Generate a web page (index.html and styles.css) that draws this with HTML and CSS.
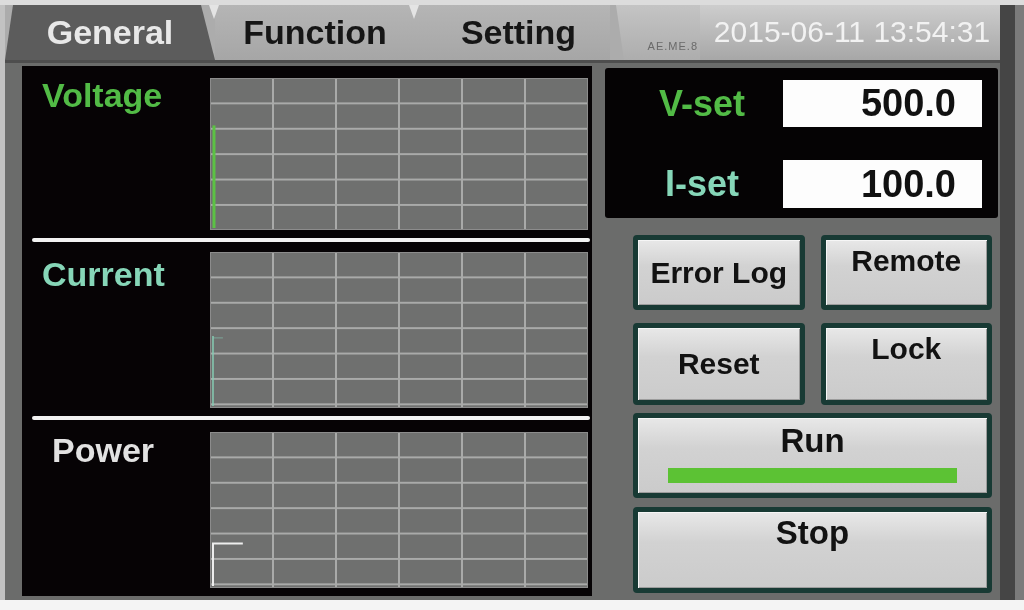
FILE: index.html
```html
<!DOCTYPE html>
<html>
<head>
    <title>Power Supply Panel</title>
    <meta charset="utf-8">
    <link rel="stylesheet" href="styles.css">
</head>
<body>
    <div class="screen">
        <div class="unit">
            <div class="tabs">
                <div class="tab tab-on">General</div>
                <div class="tab tab-notch">Function</div>
                <div class="tab tab-notch tab-last">Setting</div>
                <div class="tab-blank"><span class="ver">AE.ME.8</span></div>
                <div class="clock">2015-06-11 13:54:31</div>
            </div>
            <div class="main">
                <div class="graphs">
                    <div class="graph graph-v">
                        <div class="graph-name volt">Voltage</div>
                        <div class="plot">
                            <svg viewBox="0 0 378 152" preserveAspectRatio="none">
                                <path d="M3 47 V151" stroke="#5cc244" stroke-width="3" fill="none"/>
                            </svg>
                        </div>
                    </div>
                    <div class="rule"></div>
                    <div class="graph graph-i">
                        <div class="graph-name amp">Current</div>
                        <div class="plot">
                            <svg viewBox="0 0 378 156" preserveAspectRatio="none">
                                <path d="M2 84 V155" stroke="#86cdb4" stroke-width="1.5" fill="none"/>
                                <path d="M2 86 H12" stroke="#86cdb4" stroke-width="1" fill="none" opacity="0.6"/>
                            </svg>
                        </div>
                    </div>
                    <div class="rule"></div>
                    <div class="graph graph-p">
                        <div class="graph-name pow">Power</div>
                        <div class="plot">
                            <svg viewBox="0 0 378 156" preserveAspectRatio="none">
                                <path d="M2 155 V112 H32" stroke="#eeeeee" stroke-width="2" fill="none"/>
                            </svg>
                        </div>
                    </div>
                </div>
                <div class="side">
                    <div class="sets">
                        <div class="set-name volt">V-set</div>
                        <div class="set-val">500.0</div>
                        <div class="set-name amp">I-set</div>
                        <div class="set-val">100.0</div>
                    </div>
                    <div class="keys">
                        <button class="key">Error Log</button>
                        <button class="key key-top">Remote</button>
                        <button class="key">Reset</button>
                        <button class="key key-top">Lock</button>
                    </div>
                    <button class="key key-wide run">Run<span class="run-bar"></span></button>
                    <button class="key key-wide stop">Stop</button>
                </div>
            </div>
        </div>
        <div class="edge"></div>
    </div>
</body>
</html>
```

FILE: styles.css
```css
*{
    box-sizing: border-box;
}
body{
    margin:0;
    background-color: #f4f4f4;
    font-family: "Liberation Sans", Arial, sans-serif;
}
.screen{
    width:1024px;
    height:600px;
    display:flex;
    background-color: #6b6c6b;
    border-top:5px solid #dcdcdc;
    filter: blur(0.6px);
}
.unit{
    flex:1;
    display:flex;
    flex-direction: column;
    border-left:5px solid #c2c2c2;
}
.edge{
    width:24px;
    background: linear-gradient(to right, #454545 0, #454545 15px, #7b7b7b 15px);
}

/* tab bar */
.tabs{
    height:58px;
    display:flex;
    background-color: #acacac;
    border-bottom:3px solid #4e4e4e;
}
.tab{
    position: relative;
    height:100%;
    display:flex;
    align-items: center;
    justify-content: center;
    font-size: 34px;
    font-weight: bold;
    color:#161616;
    background: linear-gradient(#b5b5b5, #a6a6a6);
}
.tab-on{
    width:210px;
    color:#e8e8e8;
    background:#5c5c5c;
    clip-path: polygon(8px 0, 196px 0, 100% 100%, 0 100%);
}
.tab-notch{
    width:200px;
}
.tab-notch::before{
    content:"";
    position: absolute;
    left:-6px;
    top:0;
    border-left:5px solid transparent;
    border-right:5px solid transparent;
    border-top:14px solid #e4e4e4;
}
.tab-last{
    width:195px;
    padding-left: 12px;
}
.tab-blank{
    width:90px;
    display:flex;
    align-items: flex-end;
    justify-content: flex-end;
    padding: 0 2px 8px 0;
    background: linear-gradient(#c4c4c4, #adadad);
    clip-path: polygon(6px 0, 100% 0, 100% 100%, 14px 100%);
}
.ver{
    font-size: 11px;
    color:#6a6a6a;
    letter-spacing: 1px;
}
.clock{
    flex:1;
    display:flex;
    align-items: center;
    justify-content: center;
    padding-left: 4px;
    padding-bottom: 2px;
    font-size: 30px;
    color:#f2f2f2;
    background: linear-gradient(#cdcdcd, #a7a7a7);
}

/* body */
.main{
    flex:1;
    display:flex;
    padding: 3px 2px 4px 17px;
}
.graphs{
    width:570px;
    display:flex;
    flex-direction: column;
    background-color: #060305;
}
.graph{
    display:flex;
    padding: 12px 4px 8px 20px;
}
.graph-v{
    height:172px;
}
.graph-i{
    height:174px;
    padding-top:10px;
}
.graph-p{
    height:176px;
}
.graph-name{
    width:168px;
    font-size: 34px;
    font-weight: bold;
    line-height: 1;
    margin-top:0;
}
.graph-i .graph-name{
    margin-top:5px;
}
.graph-p .graph-name{
    margin-top:1px;
    padding-left: 10px;
}
.volt{
    color:#52bb46;
}
.amp{
    color:#86d6b8;
}
.pow{
    color:#e2e2e2;
}
.plot{
    flex:1;
    border:1px solid #8c8c8c;
    background-color: #6f706f;
    background-image:
        linear-gradient(90deg, #a9aaa9 2px, transparent 2px),
        linear-gradient(#a9aaa9 2px, transparent 2px);
    background-size: 63px 25.4px;
    background-position: -2px -2px;
}
.plot svg{
    display:block;
    width:100%;
    height:100%;
}
.rule{
    height:4px;
    margin: 0 2px 0 10px;
    border-radius: 2px;
    background-color: #f2f2f2;
}

/* right side */
.side{
    width:393px;
    margin-left: 13px;
    display:flex;
    flex-direction: column;
}
.sets{
    margin-top:2px;
    height:150px;
    display:grid;
    grid-template-columns: 178px 199px;
    grid-template-rows: 47px 48px;
    row-gap: 33px;
    padding: 12px 16px 10px 0;
    border-radius: 3px;
    background-color: #050304;
}
.set-name{
    display:flex;
    align-items: center;
    justify-content: center;
    padding-left: 16px;
    font-size: 36px;
    font-weight: bold;
}
.set-val{
    display:flex;
    align-items: center;
    justify-content: flex-end;
    padding-right: 26px;
    background-color: #fdfdfd;
    font-size: 38px;
    font-weight: bold;
    color:#111;
}
.keys{
    margin: 17px 6px 0 28px;
    display:grid;
    grid-template-columns: 1fr 1fr;
    grid-template-rows: 75px 82px;
    gap: 13px 16px;
}
.key{
    display:flex;
    align-items: center;
    justify-content: center;
    padding:0;
    border:5px solid #183a34;
    border-radius: 4px;
    background: linear-gradient(#e8e8e8, #d2d2d2 40%, #cbcbcb);
    box-shadow: inset 1px 1px 0 #f6f6f6, inset -1px -1px 0 #9c9c9c;
    font-family: "Liberation Sans", Arial, sans-serif;
    font-size: 30px;
    font-weight: bold;
    line-height: 1;
    color:#121212;
}
.key-top{
    align-items: flex-start;
    padding-top: 6px;
}
.key-wide{
    margin: 8px 6px 0 28px;
    flex-direction: column;
    align-items: center;
    justify-content: flex-start;
    font-size: 33px;
}
.run{
    height:85px;
    padding-top: 6px;
}
.run-bar{
    align-self: stretch;
    height:15px;
    margin: 11px 30px 0 30px;
    background-color: #5cc234;
}
.stop{
    height:86px;
    margin-top: 9px;
    padding-top: 4px;
}
```
